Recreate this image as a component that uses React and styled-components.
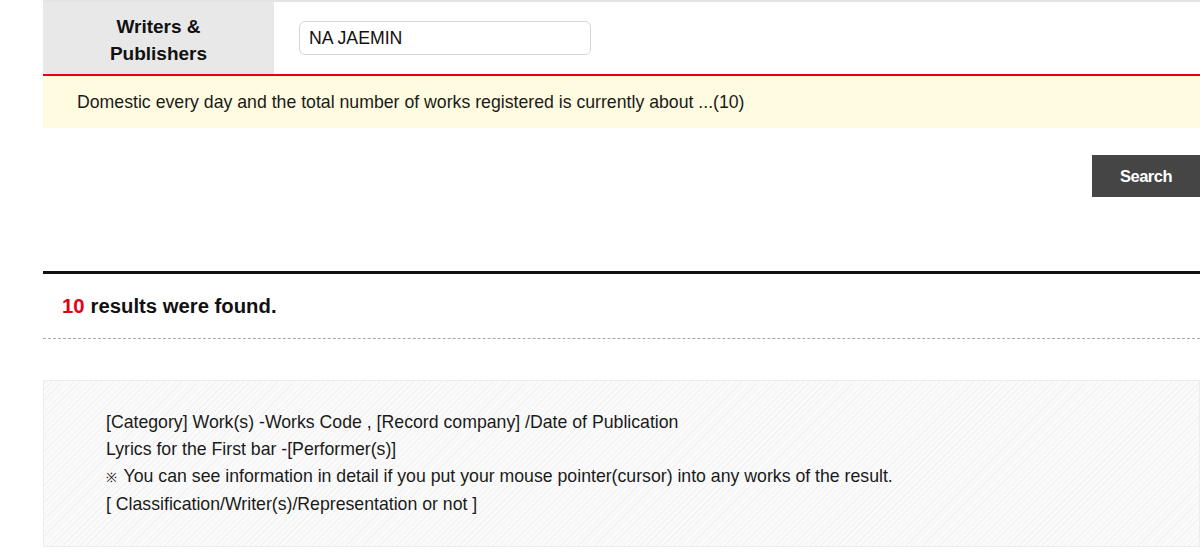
import styled, { createGlobalStyle } from "styled-components";

const GlobalStyle = createGlobalStyle`
  html, body {
    margin: 0;
    padding: 0;
    background: #fff;
    overflow: hidden;
  }
  body {
    font-family: "Liberation Sans", Arial, sans-serif;
    color: #111;
  }
`;

const Page = styled.div`
  width: 1157px;
  margin-left: 43px;
`;

// search form row
const FormRow = styled.div`
  display: flex;
  height: 72px;
  border-top: 2px solid #e4e4e4;
  border-bottom: 2px solid #e50012;
`;

const LabelCell = styled.div`
  width: 231px;
  box-sizing: border-box;
  padding-top: 4px;
  background: #e8e8e8;
  display: flex;
  align-items: center;
  justify-content: center;
  text-align: center;
  font-size: 19px;
  font-weight: 700;
  line-height: 27px;
  color: #111;
`;

const FieldCell = styled.div`
  flex: 1;
  display: flex;
  align-items: center;
  padding-left: 25px;
`;

const TextInput = styled.input`
  box-sizing: border-box;
  width: 292px;
  height: 34px;
  border: 1px solid #d6d6d6;
  border-radius: 6px;
  padding: 0 9px;
  font-family: "Liberation Sans", Arial, sans-serif;
  font-size: 17.7px;
  color: #111;
  outline: none;
`;

const Notice = styled.div`
  height: 52px;
  background: #fffbe0;
  display: flex;
  align-items: center;
  padding-left: 34px;
  font-size: 17.7px;
  color: #1a1a1a;
`;

const ButtonRow = styled.div`
  display: flex;
  justify-content: flex-end;
  padding-top: 27px;
  height: 116px;
`;

const SearchButton = styled.button`
  width: 108px;
  height: 42px;
  border: none;
  background: #454545;
  color: #fff;
  font-family: "Liberation Sans", Arial, sans-serif;
  font-size: 16.5px;
  font-weight: 700;
  letter-spacing: -0.5px;
  cursor: pointer;
`;

const Divider = styled.div`
  height: 3px;
  background: #111;
`;

const ResultCount = styled.div`
  padding-left: 19px;
  height: 64px;
  display: flex;
  align-items: center;
  font-size: 20.3px;
  font-weight: 700;
  color: #111;
  border-bottom: 1px dashed #a8a8a8;
`;

const Count = styled.span`
  color: #e50012;
  margin-right: 6px;
`;

const Legend = styled.div`
  margin-top: 41px;
  box-sizing: border-box;
  height: 167px;
  padding: 28px 0 0 62px;
  border: 1px solid #ededed;
  background: repeating-linear-gradient(
    -45deg,
    #fafafa 0px,
    #fafafa 3px,
    #f3f3f3 3px,
    #f3f3f3 4px
  );
  font-size: 17.7px;
  line-height: 27px;
  color: #1a1a1a;
`;

const LegendLine = styled.div``;

const Mark = styled.span`
  font-size: 13px;
  margin-right: 2px;
`;

export default function App() {
  return (
    <>
      <GlobalStyle />
      <Page>
        <FormRow>
          <LabelCell>
            Writers &amp;
            <br />
            Publishers
          </LabelCell>
          <FieldCell>
            <TextInput defaultValue="NA JAEMIN" />
          </FieldCell>
        </FormRow>
        <Notice>
          Domestic every day and the total number of works registered is currently about ...(10)
        </Notice>
        <ButtonRow>
          <SearchButton>Search</SearchButton>
        </ButtonRow>
        <Divider />
        <ResultCount>
          <Count>10</Count> results were found.
        </ResultCount>
        <Legend>
          <LegendLine>[Category] Work(s) -Works Code , [Record company] /Date of Publication</LegendLine>
          <LegendLine>Lyrics for the First bar -[Performer(s)]</LegendLine>
          <LegendLine>
            <Mark>{"\u203B"}</Mark> You can see information in detail if you put your mouse pointer(cursor) into any works of the result.
          </LegendLine>
          <LegendLine>[ Classification/Writer(s)/Representation or not ]</LegendLine>
        </Legend>
      </Page>
    </>
  );
}
